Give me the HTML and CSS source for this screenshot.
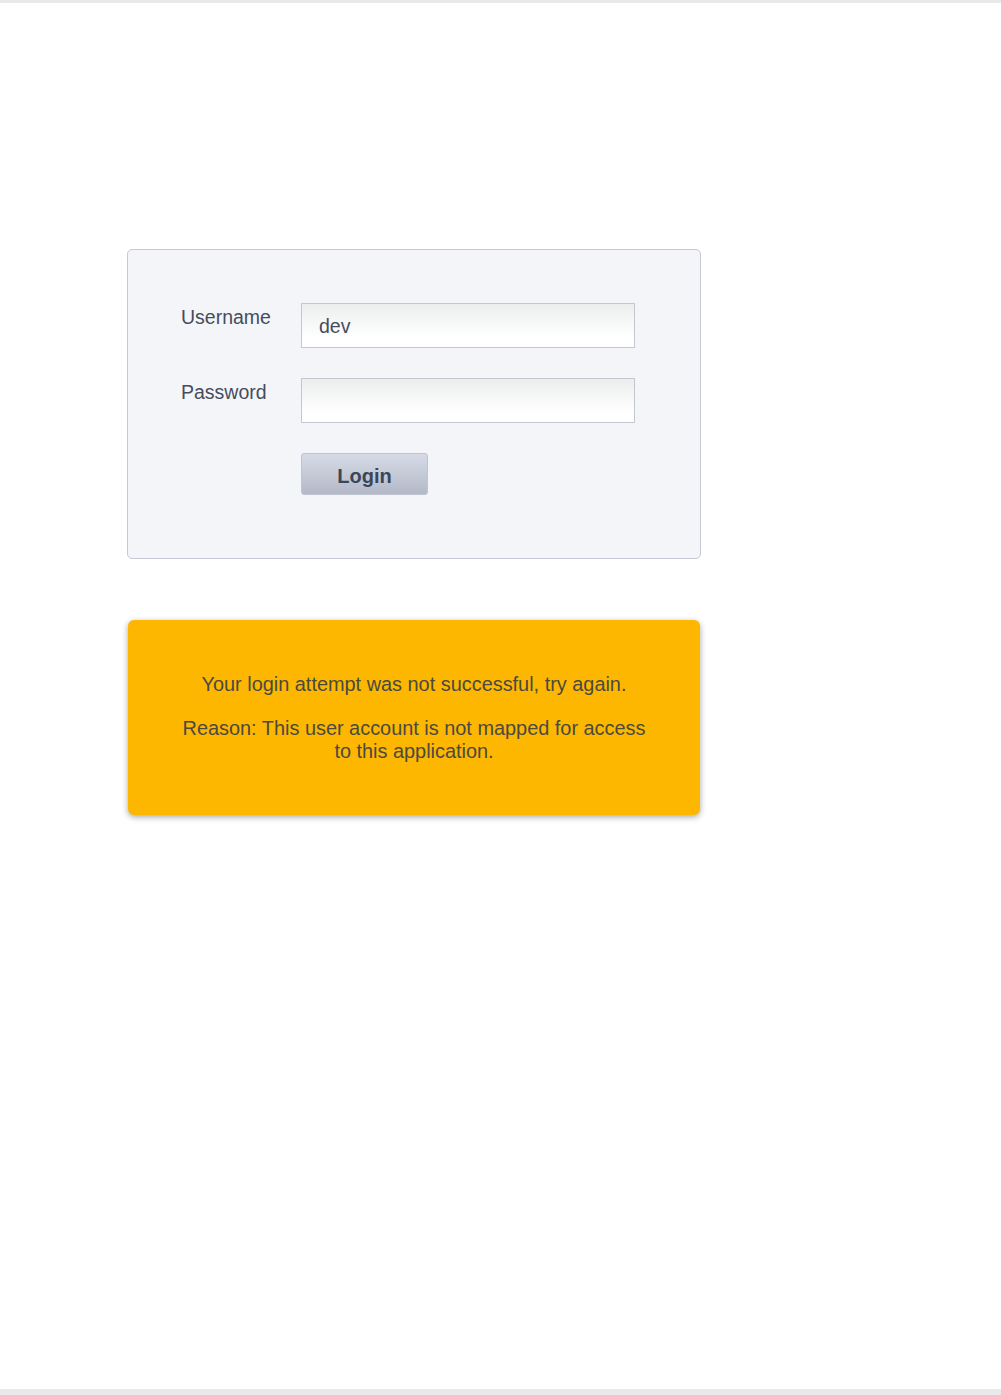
FILE: index.html
```html
<!DOCTYPE html>
<html lang="en">
<head>
  <meta charset="UTF-8">
  <title>Login</title>
  <link rel="stylesheet" href="styles.css">
</head>
<body>
  <div class="page">
    <div class="login-box">
      <form class="login-form">
        <label class="field-label" for="username">Username</label>
        <input class="field-input" id="username" type="text" value="dev">
        <label class="field-label" for="password">Password</label>
        <input class="field-input" id="password" type="password">
        <span></span>
        <div>
          <button class="login-btn" type="submit">Login</button>
        </div>
      </form>
    </div>

    <div class="error-box">
      <p>Your login attempt was not successful, try again.</p>
      <p>Reason: This user account is not mapped for access<br>to this application.</p>
    </div>
  </div>
</body>
</html>
```

FILE: styles.css
```css
html {
  background-color: #e9e9e9;
}

body {
  margin: 0;
  font-family: 'Liberation Sans', Arial, sans-serif;
  color: #464c5e;
}

.page {
  background-color: #ffffff;
  margin-top: 3px;
  min-height: 1386px;
  padding-top: 246px;
  box-sizing: border-box;
}

.login-box {
  margin-left: 127px;
  width: 574px;
  height: 310px;
  box-sizing: border-box;
  border: 1px solid #c6c9d3;
  border-radius: 5px;
  background-color: #f4f5f9;
  padding: 53px 0 0 53px;
}

.login-form {
  display: grid;
  grid-template-columns: 120px 334px;
  row-gap: 30px;
}

.field-label {
  font-size: 19.5px;
  margin-top: 3px;
}

.field-input {
  height: 45px;
  box-sizing: border-box;
  border: 1px solid #c4c7d0;
  background-image: linear-gradient(to bottom, #eceeee, #ffffff 80%);
  font-family: 'Liberation Sans', Arial, sans-serif;
  font-size: 19.5px;
  color: #464c5e;
  padding: 1px 17px 0;
  margin: 0;
  outline: none;
}

.login-btn {
  width: 127px;
  height: 42px;
  border: 1px solid #c0c4cf;
  border-radius: 3px;
  background-image: linear-gradient(to bottom, #d6dbe6, #b3b9c8);
  font-family: 'Liberation Sans', Arial, sans-serif;
  font-weight: bold;
  font-size: 20px;
  color: #3d4559;
  cursor: pointer;
  padding: 5px 0 0;
}

.error-box {
  margin: 61px 0 0 128px;
  width: 572px;
  height: 195px;
  box-sizing: border-box;
  background-color: #fdb700;
  border-radius: 6px;
  box-shadow: 0 2px 6px rgba(0, 0, 0, 0.35);
  padding-top: 53px;
  text-align: center;
  font-size: 19.9px;
  line-height: 23px;
  color: #4b4a42;
}

.error-box p {
  margin: 0 0 21px;
}
```
